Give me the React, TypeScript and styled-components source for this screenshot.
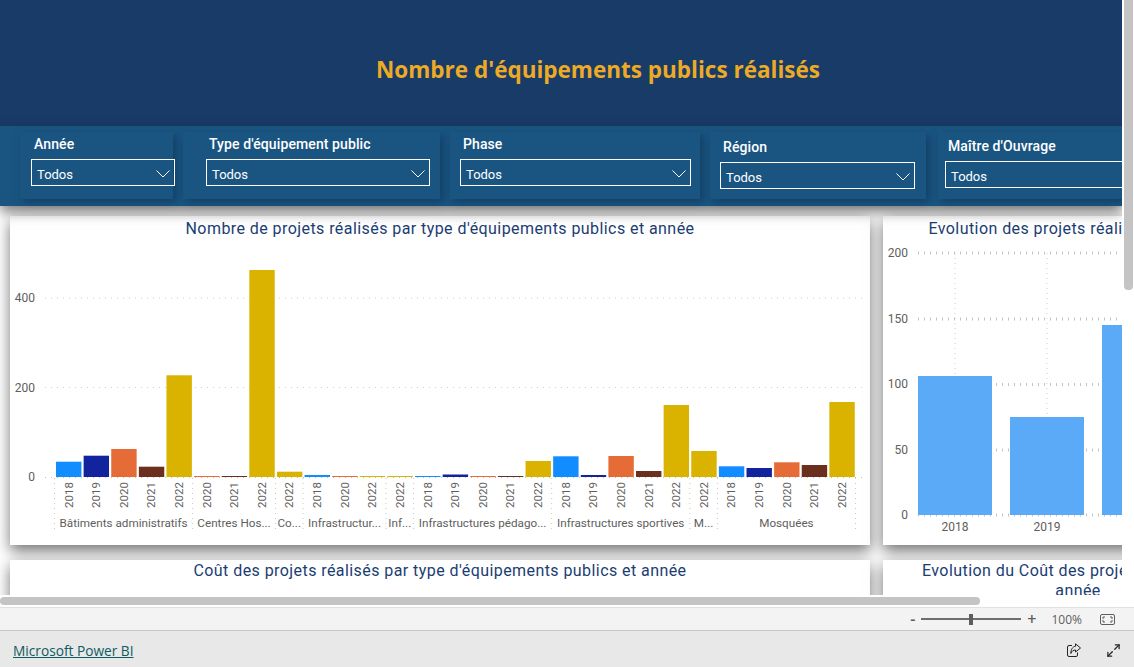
import React from 'react'
import styled, { createGlobalStyle } from 'styled-components'
import { Maximize2 } from 'lucide-react'

const din = `"Roboto", "Liberation Sans", sans-serif`
const segoe = `"Open Sans", "Noto Sans", sans-serif`

const GlobalStyle = createGlobalStyle`
    html, body { margin: 0; padding: 0; height: 100%; overflow: hidden; background: #fff; }
`

const Shell = styled.div`
    width: 1134px;
    height: 667px;
    display: flex;
    flex-direction: column;
    overflow: hidden;
`

const Main = styled.div`
    display: flex;
    height: 595px;
    flex: none;
`

const Viewport = styled.div`
    width: 1122px;
    flex: none;
    overflow: hidden;
    background: #fff;
`

const Header = styled.div`
    height: 126px;
    background: #193b68;
    padding-left: 376px;
    padding-top: 54px;
    box-sizing: border-box;
    color: #edaa25;
    font-family: ${segoe};
    font-weight: 700;
    font-size: 22.5px;
    line-height: 32px;
`

const FilterBar = styled.div`
    height: 80px;
    background: #1a5582;
    display: flex;
    padding: 6px 0 0 20px;
    box-sizing: border-box;
    box-shadow: 0 6px 12px rgba(0, 0, 0, 0.5);
    position: relative;
    z-index: 2;
`

const Slicer = styled.div<{ w: number; gap: number; top: number; inset: number }>`
    width: ${p => p.w}px;
    height: 67px;
    flex: none;
    margin-right: ${p => p.gap}px;
    background: #1a5582;
    box-shadow: 3px 3px 8px rgba(15, 45, 75, 0.55);
    padding: ${p => p.top}px 0 0 ${p => p.inset}px;
    box-sizing: border-box;
`

const SlicerLabel = styled.div`
    color: #fff;
    font-family: ${din};
    font-weight: 500;
    font-size: 14px;
    letter-spacing: 0.1px;
    line-height: 16px;
    padding-left: 3px;
    margin-bottom: 7px;
`

const Select = styled.div<{ w: number }>`
    width: ${p => p.w}px;
    height: 27px;
    box-sizing: border-box;
    border: 1px solid #fff;
    display: flex;
    align-items: center;
    justify-content: space-between;
    padding: 3px 4px 0 5px;
    color: #fff;
    font-family: ${din};
    font-size: 13px;
`

const Row = styled.div<{ top: number }>`
    display: flex;
    gap: 13px;
    padding: ${p => p.top}px 0 0 10px;
`

const Card = styled.div<{ w: number; h: number }>`
    width: ${p => p.w}px;
    height: ${p => p.h}px;
    flex: none;
    background: #fff;
    box-shadow: 0 6px 14px rgba(0, 0, 0, 0.55);
`

const ChartTitle = styled.div<{ top: number }>`
    color: #1b3d72;
    font-family: ${din};
    font-size: 16px;
    line-height: 20px;
    letter-spacing: 0.43px;
    text-align: center;
    padding: ${p => p.top}px 30px 0;
`

const ChartSvg = styled.svg`
    display: block;
    text {
        font-family: ${din};
        fill: #605e5c;
    }
`

const VScroll = styled.div`
    width: 12px;
    flex: none;
    background: #fff;
`

const VThumb = styled.div`
    width: 9px;
    height: 290px;
    margin-left: 2px;
    background: #c4c4c4;
    border-radius: 0 0 4px 4px;
`

const HScroll = styled.div`
    height: 12px;
    flex: none;
    padding-top: 2px;
    box-sizing: border-box;
    background: #fff;
`

const HThumb = styled.div`
    width: 980px;
    height: 8px;
    background: #c4c4c4;
    border-radius: 4px;
`

const ZoomBar = styled.div`
    height: 24px;
    box-sizing: border-box;
    background: #f3f3f3;
    border-top: 1px solid #e1e1e1;
    border-bottom: 1px solid #c8c8c8;
    display: flex;
    align-items: center;
    justify-content: flex-end;
    padding-right: 19px;
    color: #605e5c;
    font-family: ${segoe};
    font-size: 12px;
    flex: none;
`

const ZoomSign = styled.span`
    font-size: 16px;
    font-weight: 600;
    line-height: 16px;
`

const ZoomTrack = styled.div`
    width: 100px;
    height: 2px;
    background: #6e6e6e;
    margin: 0 6px;
    display: flex;
    justify-content: center;
    align-items: center;
`

const ZoomKnob = styled.div`
    width: 4px;
    height: 11px;
    flex: none;
    background: #605e5c;
`

const ZoomValue = styled.span`
    margin: 0 18px 0 15px;
`

const Footer = styled.div`
    flex: 1;
    background: #e8e8e8;
    display: flex;
    align-items: center;
    justify-content: space-between;
    padding: 2px 13px 0 13px;
`

const BrandLink = styled.a`
    color: #0d5c63;
    font-family: ${segoe};
    font-size: 13.7px;
    text-decoration: underline;
`

const FooterIcons = styled.div`
    display: flex;
    gap: 25px;
    align-items: center;
    color: #252423;
`

const colors: Record<string, string> = {
    '2018': '#118dff',
    '2019': '#12239e',
    '2020': '#e66c37',
    '2021': '#6b2f1d',
    '2022': '#d9b300',
}

const groups = [
    { label: 'Bâtiments administratifs', years: [['2018', 461.7], ['2019', 455.7], ['2020', 449], ['2021', 466.7], ['2022', 375.3]] },
    { label: 'Centres Hos...', years: [['2020', 476], ['2021', 476], ['2022', 270]] },
    { label: 'Co...', years: [['2022', 471.7]] },
    { label: 'Infrastructur...', years: [['2018', 475], ['2020', 476], ['2022', 476]] },
    { label: 'Inf...', years: [['2022', 476]] },
    { label: 'Infrastructures pédago...', years: [['2018', 476], ['2019', 474.5], ['2020', 476], ['2021', 476], ['2022', 461]] },
    { label: 'Infrastructures sportives', years: [['2018', 456.3], ['2019', 475], ['2020', 456], ['2021', 471], ['2022', 405]] },
    { label: 'M...', years: [['2022', 451]] },
    { label: 'Mosquées', years: [['2018', 466.3], ['2019', 468], ['2020', 462.3], ['2021', 465], ['2022', 402]] },
] as { label: string; years: [string, number][] }[]

const slicers = [
    { label: 'Année', w: 153, gap: 10, sel: 144, top: 4, inset: 11 },
    { label: "Type d'équipement public", w: 257, gap: 10, sel: 224, top: 4, inset: 23 },
    { label: 'Phase', w: 250, gap: 10, sel: 231, top: 4, inset: 10 },
    { label: 'Région', w: 216, gap: 12, sel: 195, top: 7, inset: 10 },
    { label: "Maître d'Ouvrage", w: 240, gap: 0, sel: 240, top: 6, inset: 7 },
]

const Chevron = () => (
    <svg width="14" height="8" viewBox="0 0 14 8" fill="none" stroke="#fff" strokeWidth="1">
        <path d="M0.5 0.5 L7 7 L13.5 0.5" />
    </svg>
)

const BASE = 477
const CARD_Y = 239
const CHART_H = 306

const TypeChart = () => {
    let index = 0
    const x0 = 56
    const step = 27.62
    return (
        <ChartSvg width="860" height={CHART_H} viewBox={`10 ${CARD_Y} 860 ${CHART_H}`}>
            {[298, 387.5].map(y => (
                <line key={y} x1="45" x2="862" y1={y} y2={y} stroke="#cfcfcf" strokeDasharray="1 5" />
            ))}
            <line x1="45" x2="862" y1={BASE + 0.5} y2={BASE + 0.5} stroke="#bdbdbd" strokeDasharray="1 5" />
            <text x="35" y="302" textAnchor="end" fontSize="12">400</text>
            <text x="35" y="392" textAnchor="end" fontSize="12">200</text>
            <text x="35" y="481" textAnchor="end" fontSize="12">0</text>
            {groups.map(group => {
                const start = index
                const bars = group.years.map(([year, top]) => {
                    const x = x0 + step * index
                    index += 1
                    return (
                        <g key={`${group.label}${index}`}>
                            <rect x={x} y={top} width="25.4" height={BASE - top} fill={colors[year]} />
                            <text
                                fontSize="11.5"
                                textAnchor="middle"
                                transform={`translate(${x + 16.5} 495) rotate(-90)`}
                            >
                                {year}
                            </text>
                        </g>
                    )
                })
                const left = x0 + step * start - 1.5
                const right = x0 + step * index - 1.5
                return (
                    <g key={group.label}>
                        {bars}
                        <line x1={left} x2={left} y1="478" y2="533" stroke="#c8c8c8" strokeDasharray="1 4" />
                        <text x={(left + right) / 2} y="527" textAnchor="middle" fontSize="11.7">
                            {group.label}
                        </text>
                    </g>
                )
            })}
            <line x1="855.5" x2="855.5" y1="478" y2="533" stroke="#c8c8c8" strokeDasharray="1 4" />
        </ChartSvg>
    )
}

const evolution = [
    { year: '2018', x: 918, top: 376 },
    { year: '2019', x: 1010, top: 417 },
    { year: '', x: 1102, top: 325 },
]

const EvolutionChart = () => (
    <ChartSvg width="390" height={CHART_H} viewBox={`883 ${CARD_Y} 390 ${CHART_H}`}>
        {[955, 1047].map(x => (
            <line key={x} x1={x} x2={x} y1="253" y2="515" stroke="#cfcfcf" strokeDasharray="1 4" />
        ))}
        {[253, 319, 384.5, 450, 515].map(y => (
            <line key={y} x1="918" x2="1118" y1={y} y2={y} stroke="#c4c4c4" strokeWidth="3" strokeDasharray="1 5" />
        ))}
        {evolution.map(bar => (
            <g key={bar.x}>
                <rect x={bar.x} y={bar.top} width="74" height={515 - bar.top} fill="#5aaaf7" />
                {bar.year && <text x={bar.x + 37} y="531" textAnchor="middle" fontSize="12">{bar.year}</text>}
            </g>
        ))}
        {[[200, 257], [150, 323], [100, 388], [50, 454], [0, 519]].map(([value, y]) => (
            <text key={value} x="908" y={y} textAnchor="end" fontSize="12">{value}</text>
        ))}
    </ChartSvg>
)

const FitIcon = () => (
    <svg width="15" height="11" viewBox="0 0 15 11" fill="none" stroke="#605e5c" strokeWidth="1">
        <rect x="0.5" y="0.5" width="14" height="10" rx="1.5" />
        <path d="M3 5 V3 H5 M10 3 H12 V5 M12 6 V8 H10 M5 8 H3 V6" />
    </svg>
)

const ShareIcon = () => (
    <svg width="14" height="14" viewBox="0 0 14 14" fill="none" stroke="currentColor" strokeWidth="1">
        <path d="M5 2.5 H2 a1.5 1.5 0 0 0 -1.5 1.5 V12 a1.5 1.5 0 0 0 1.5 1.5 H9 a1.5 1.5 0 0 0 1.5 -1.5 V9.5" />
        <path d="M8.5 0.8 L13.5 5 L8.5 9 V7 C6.3 7 4.8 8 3.8 10.5 C3.8 7 5.4 3.5 8.5 3.3 Z" />
    </svg>
)

export default function App() {
    return (
        <Shell>
            <GlobalStyle />
            <Main>
                <Viewport>
                    <Header>Nombre d'équipements publics réalisés</Header>
                    <FilterBar>
                        {slicers.map(s => (
                            <Slicer key={s.label} w={s.w} gap={s.gap} top={s.top} inset={s.inset}>
                                <SlicerLabel>{s.label}</SlicerLabel>
                                <Select w={s.sel}>
                                    Todos
                                    <Chevron />
                                </Select>
                            </Slicer>
                        ))}
                    </FilterBar>
                    <Row top={10}>
                        <Card w={860} h={329}>
                            <ChartTitle top={3}>Nombre de projets réalisés par type d'équipements publics et année</ChartTitle>
                            <TypeChart />
                        </Card>
                        <Card w={390} h={329}>
                            <ChartTitle top={3}>Evolution des projets réalisés par année</ChartTitle>
                            <EvolutionChart />
                        </Card>
                    </Row>
                    <Row top={15}>
                        <Card w={860} h={200}>
                            <ChartTitle top={1}>Coût des projets réalisés par type d'équipements publics et année</ChartTitle>
                        </Card>
                        <Card w={390} h={200}>
                            <ChartTitle top={1}>Evolution du Coût des projets réalisés par année</ChartTitle>
                        </Card>
                    </Row>
                </Viewport>
                <VScroll>
                    <VThumb />
                </VScroll>
            </Main>
            <HScroll>
                <HThumb />
            </HScroll>
            <ZoomBar>
                <ZoomSign>-</ZoomSign>
                <ZoomTrack>
                    <ZoomKnob />
                </ZoomTrack>
                <ZoomSign>+</ZoomSign>
                <ZoomValue>100%</ZoomValue>
                <FitIcon />
            </ZoomBar>
            <Footer>
                <BrandLink href="#">Microsoft Power BI</BrandLink>
                <FooterIcons>
                    <ShareIcon />
                    <Maximize2 size={15} />
                </FooterIcons>
            </Footer>
        </Shell>
    )
}
